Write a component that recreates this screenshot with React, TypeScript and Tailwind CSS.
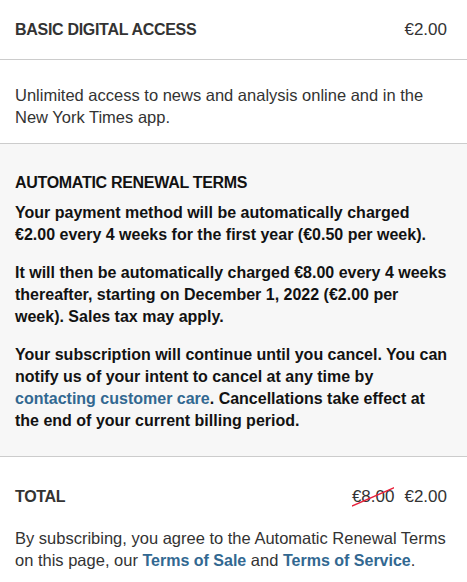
const Price = ({ children }: { children: React.ReactNode }) => (
  <span className="text-[17px] text-[#333]">{children}</span>
);

export default function App() {
  return (
    <div className="w-[467px] bg-white font-['Liberation_Sans',sans-serif] text-[#333]">
      <div className="flex items-center justify-between h-[60px] pl-[15px] pr-[20px] border-b border-[#ccc]">
        <span className="text-[16px] font-bold tracking-[-0.3px]">BASIC DIGITAL ACCESS</span>
        <Price>€2.00</Price>
      </div>

      <div className="px-[15px] pt-[24px] pb-[15px] border-b border-[#ccc] text-[16.5px] leading-[22px]">
        Unlimited access to news and analysis online and in the New York Times app.
      </div>

      <div className="bg-[#f7f7f7] pl-[15px] pr-[19px] pt-[28px] pb-[24px] text-[#121212] border-b border-[#ccc]">
        <h3 className="text-[16px] font-bold leading-[22px] tracking-[-0.3px] mb-[8px]">
          AUTOMATIC RENEWAL TERMS
        </h3>
        <div className="flex flex-col gap-[16px] text-[16px] leading-[22px] font-bold">
          <p>
            Your payment method will be automatically charged €2.00 every 4 weeks for the first year (€0.50 per week).
          </p>
          <p>
            It will then be automatically charged €8.00 every 4 weeks thereafter, starting on December 1, 2022 (€2.00 per week). Sales tax may apply.
          </p>
          <p>
            Your subscription will continue until you cancel. You can notify us of your intent to cancel at any time by{" "}
            <a className="text-[#326891]">contacting customer care</a>. Cancellations take effect at the end of your current billing period.
          </p>
        </div>
      </div>

      <div className="px-[15px] pt-[27px] pb-[20px]">
        <div className="flex items-center justify-between pr-[5px]">
          <span className="text-[16px] font-bold tracking-[-0.3px]">TOTAL</span>
          <div className="flex items-center gap-[10px]">
            <span className="relative text-[17px] text-[#333]">
              €8.00
              <svg className="absolute left-0 top-0 w-full h-full" viewBox="0 0 44 22" preserveAspectRatio="none">
                <line x1="0" y1="19" x2="44" y2="3" stroke="#e8203a" strokeWidth="1.2" />
              </svg>
            </span>
            <Price>€2.00</Price>
          </div>
        </div>
        <p className="mt-[17px] text-[16.5px] leading-[22px]">
          By subscribing, you agree to the Automatic Renewal Terms on this page, our{" "}
          <a className="text-[#326891] font-bold text-[16px]">Terms of Sale</a> and{" "}
          <a className="text-[#326891] font-bold text-[16px]">Terms of Service</a>.
        </p>
      </div>
    </div>
  );
}
